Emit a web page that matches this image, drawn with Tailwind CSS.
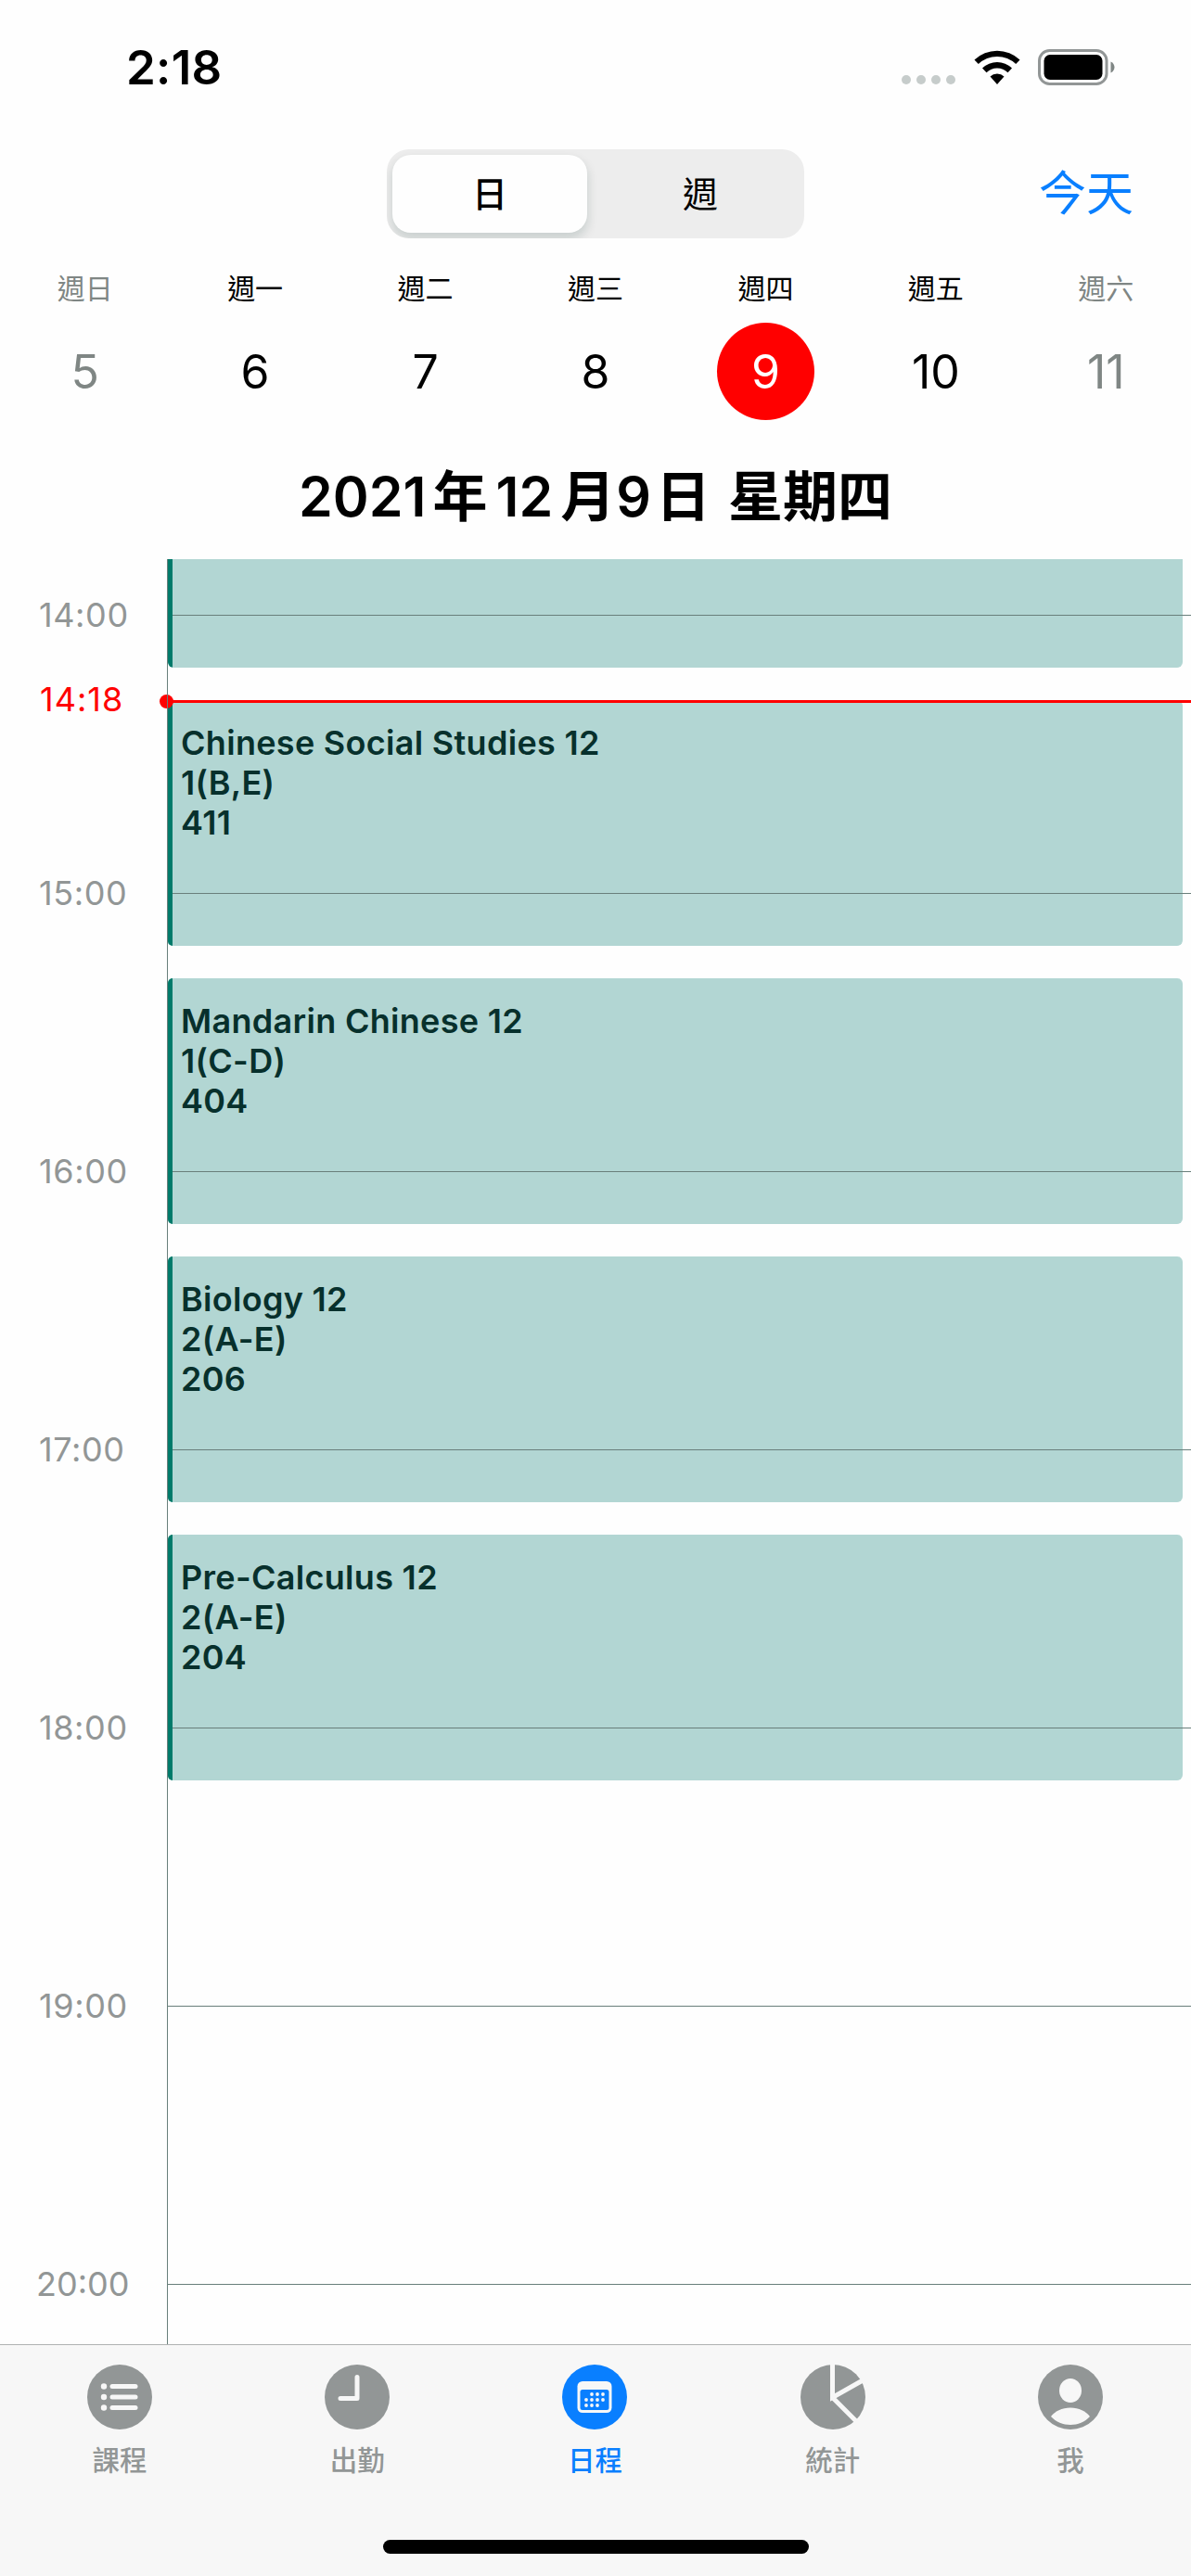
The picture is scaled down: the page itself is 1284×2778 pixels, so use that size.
<!DOCTYPE html>
<html lang="zh-Hant">
<head>
<meta charset="utf-8">
<title>日程</title>
<script src="https://cdn.jsdelivr.net/npm/@tailwindcss/browser@4"></script>
</head>
<body class="bg-white">
<div class="w-[1284px] h-[2778px] flex flex-col overflow-hidden bg-[#fefefe] text-black font-['Inter','Noto_Sans_CJK_TC',sans-serif]">

  <!-- Status bar -->
  <header class="h-[141px] shrink-0 flex items-start justify-between pl-[136px] pr-[82px]">
    <div class="mt-[43px] h-[60px] leading-[60px] text-[51px] font-semibold tracking-[0.3px]">2:18</div>
    <div class="mt-[53px] flex items-start">
      <div class="mt-[28px] mr-[20px] flex gap-[6px]">
        <span class="size-[10px] rounded-full bg-[#c6cccb]"></span>
        <span class="size-[10px] rounded-full bg-[#c6cccb]"></span>
        <span class="size-[10px] rounded-full bg-[#c6cccb]"></span>
        <span class="size-[10px] rounded-full bg-[#c6cccb]"></span>
      </div>
      <svg class="w-[50px] h-[38px]" viewBox="0 0 50 38" fill="#000">
        <path d="M0.5 11.5A35.5 35.5 0 0 1 49.500 11.500L45.200 16.100A29 29 0 0 0 4.800 16.100Z"/>
        <path d="M9 20.600A23 23 0 0 1 41 20.600L36.500 25.200A16.500 16.500 0 0 0 13.500 25.200Z"/>
        <path d="M17.500 29.500A11 11 0 0 1 32.500 29.500L25 38Z"/>
      </svg>
      <svg class="ml-[19px] w-[83px] h-[39px]" viewBox="0 0 83 39">
        <rect x="1.500" y="1.500" width="72.500" height="36" rx="11" fill="none" stroke="#929696" stroke-width="3"/>
        <rect x="6.500" y="6" width="63" height="27" rx="6.500" fill="#000"/>
        <path d="M78.500 13.500V25.500C81 24.500 82.500 22 82.500 19.500S81 14.500 78.500 13.500Z" fill="#7f8684"/>
      </svg>
    </div>
  </header>

  <!-- View switch -->
  <div class="h-[136px] shrink-0 grid grid-cols-[417px_450px_1fr]">
    <div class="col-start-2 mt-[20px] h-[96px] flex p-[6px] rounded-[24px] bg-[#ededed] overflow-hidden text-[38px]">
      <div class="w-[210px] h-[84px] rounded-[20px] bg-[#fefefe] shadow-[0_6px_11px_1px_rgba(0,50,42,0.15)] flex items-center justify-center font-medium">日</div>
      <div class="flex-1 h-[84px] flex items-center justify-center pl-[16px]">週</div>
    </div>
    <div class="mt-[30px] h-[76px] leading-[76px] pr-[62px] text-right text-[51px] text-[#097fff]">今天</div>
  </div>

  <!-- Week strip -->
  <div class="h-[193px] shrink-0 grid grid-cols-7 text-center">
    <div class="flex flex-col items-center text-[#7f8684]"><span class="mt-[12px] h-[44px] leading-[44px] text-[30px]">週日</span><span class="mt-[15px] size-[105px] leading-[107px] text-[50px]">5</span></div>
    <div class="flex flex-col items-center"><span class="mt-[12px] h-[44px] leading-[44px] text-[30px]">週一</span><span class="mt-[15px] size-[105px] leading-[107px] text-[50px]">6</span></div>
    <div class="flex flex-col items-center"><span class="mt-[12px] h-[44px] leading-[44px] text-[30px]">週二</span><span class="mt-[15px] size-[105px] leading-[107px] text-[50px]">7</span></div>
    <div class="flex flex-col items-center"><span class="mt-[12px] h-[44px] leading-[44px] text-[30px]">週三</span><span class="mt-[15px] size-[105px] leading-[107px] text-[50px]">8</span></div>
    <div class="flex flex-col items-center"><span class="mt-[12px] h-[44px] leading-[44px] text-[30px]">週四</span><span class="mt-[15px] size-[105px] leading-[107px] text-[50px] rounded-full bg-[#ff0000] text-white">9</span></div>
    <div class="flex flex-col items-center"><span class="mt-[12px] h-[44px] leading-[44px] text-[30px]">週五</span><span class="mt-[15px] size-[105px] leading-[107px] text-[50px]">10</span></div>
    <div class="flex flex-col items-center text-[#7f8684]"><span class="mt-[12px] h-[44px] leading-[44px] text-[30px]">週六</span><span class="mt-[15px] size-[105px] leading-[107px] text-[50px]">11</span></div>
  </div>

  <!-- Selected date -->
  <h1 class="h-[133px] shrink-0 flex justify-center pt-[26px] leading-[80px] text-[59px] font-semibold">2021<span class="ml-[7px]">年</span><span class="ml-[9px]">12</span><span class="ml-[8px]">月</span><span class="ml-px">9</span><span class="ml-[5px]">日</span><span class="ml-[19px]">星期四</span></h1>

  <!-- Timeline -->
  <main class="relative h-[1925px] shrink-0 overflow-hidden">
    <!-- Events -->
    <div class="absolute left-[181px] right-[9px] top-0 flex flex-col gap-[35px] text-[36px] leading-[43px] tracking-[0.3px] font-semibold text-[#07302c]">
      <div class="h-[117px] rounded-b-[6px] overflow-hidden bg-[#b2d6d3] flex"><div class="relative z-10 w-[5px] bg-[#007a6a] rounded-bl-[5px]"></div></div>
      <div class="h-[265px] rounded-[6px] bg-[#b2d6d3] flex"><div class="relative z-10 w-[5px] bg-[#007a6a] rounded-l-[5px]"></div><div class="pl-[9px] pt-[25px]"><p>Chinese Social Studies 12</p><p>1(B,E)</p><p>411</p></div></div>
      <div class="h-[265px] rounded-[6px] bg-[#b2d6d3] flex"><div class="relative z-10 w-[5px] bg-[#007a6a] rounded-l-[5px]"></div><div class="pl-[9px] pt-[25px]"><p>Mandarin Chinese 12</p><p>1(C-D)</p><p>404</p></div></div>
      <div class="h-[265px] rounded-[6px] bg-[#b2d6d3] flex"><div class="relative z-10 w-[5px] bg-[#007a6a] rounded-l-[5px]"></div><div class="pl-[9px] pt-[25px]"><p>Biology 12</p><p>2(A-E)</p><p>206</p></div></div>
      <div class="h-[265px] rounded-[6px] bg-[#b2d6d3] flex"><div class="relative z-10 w-[5px] bg-[#007a6a] rounded-l-[5px]"></div><div class="pl-[9px] pt-[25px]"><p>Pre-Calculus 12</p><p>2(A-E)</p><p>204</p></div></div>
    </div>

    <!-- Hours -->
    <div class="relative -mt-[90px] text-[36px] tracking-[0.6px] text-[#929696]">
      <div class="h-[300px] flex"><span class="w-[180px] pl-[42px] leading-[300px]">14:00</span><i class="flex-1 mt-[150px] h-px bg-[#697f7b]"></i></div>
      <div class="h-[300px] flex"><span class="w-[180px] pl-[42px] leading-[300px]">15:00</span><i class="flex-1 mt-[150px] h-px bg-[#697f7b]"></i></div>
      <div class="h-[300px] flex"><span class="w-[180px] pl-[42px] leading-[300px]">16:00</span><i class="flex-1 mt-[150px] h-px bg-[#697f7b]"></i></div>
      <div class="h-[300px] flex"><span class="w-[180px] pl-[42px] leading-[300px]">17:00</span><i class="flex-1 mt-[150px] h-px bg-[#697f7b]"></i></div>
      <div class="h-[300px] flex"><span class="w-[180px] pl-[42px] leading-[300px]">18:00</span><i class="flex-1 mt-[150px] h-px bg-[#697f7b]"></i></div>
      <div class="h-[300px] flex"><span class="w-[180px] pl-[42px] leading-[300px]">19:00</span><i class="flex-1 mt-[150px] h-px bg-[#697f7b]"></i></div>
      <div class="h-[300px] flex"><span class="w-[180px] pl-[39px] leading-[300px] tracking-normal">20:00</span><i class="flex-1 mt-[150px] h-px bg-[#697f7b]"></i></div>
    </div>

    <!-- Current time -->
    <div class="absolute inset-x-0 top-[132px] z-20 h-[40px] flex items-start text-[36px] tracking-[1px] text-[#ff0000]">
      <span class="w-[172px] pl-[43px] leading-[39px]">14:18</span>
      <i class="mt-[14px] size-[15px] rounded-full bg-[#ff0000]"></i>
      <i class="mt-[20px] -ml-px h-[3px] flex-1 bg-[#ff0000]"></i>
    </div>
    <i class="absolute z-30 left-[180px] top-0 bottom-0 w-px bg-[#697f7b]"></i>
  </main>

  <!-- Tab bar -->
  <nav class="relative h-[250px] shrink-0 border-t border-[#b0b2b2] bg-[#f7f7f7] grid grid-cols-5 pl-px pr-[2px] text-[29.500px] font-medium text-[#929696]">
    <div class="flex flex-col items-center pt-[21px]">
      <svg class="size-[70px]" viewBox="0 0 70 70"><circle cx="35" cy="35" r="35" fill="#929696"/><g fill="#f7f7f7"><circle cx="18" cy="23.500" r="3.200"/><circle cx="18" cy="35" r="3.200"/><circle cx="18" cy="46.500" r="3.200"/><rect x="24.500" y="21" width="30" height="5" rx="2.500"/><rect x="24.500" y="32.500" width="30" height="5" rx="2.500"/><rect x="24.500" y="44" width="30" height="5" rx="2.500"/></g></svg>
      <span class="mt-[11px] leading-[44px]">課程</span>
    </div>
    <div class="flex flex-col items-center pt-[21px]">
      <svg class="size-[70px]" viewBox="0 0 70 70"><circle cx="35" cy="35" r="35" fill="#929696"/><path d="M35 13.500V36.500H17" fill="none" stroke="#f7f7f7" stroke-width="5" stroke-linecap="round" stroke-linejoin="round"/></svg>
      <span class="mt-[11px] leading-[44px]">出勤</span>
    </div>
    <div class="flex flex-col items-center pt-[21px] text-[#097fff]">
      <svg class="size-[70px]" viewBox="0 0 70 70"><circle cx="35" cy="35" r="35" fill="#097fff"/><rect x="16.500" y="18" width="37" height="34" rx="5.500" fill="#f7f7f7"/><rect x="19.500" y="27" width="31" height="22" rx="2.500" fill="#097fff"/><g fill="#f7f7f7"><circle cx="32" cy="32" r="1.900"/><circle cx="38" cy="32" r="1.900"/><circle cx="44" cy="32" r="1.900"/><circle cx="26" cy="38" r="1.900"/><circle cx="32" cy="38" r="1.900"/><circle cx="38" cy="38" r="1.900"/><circle cx="44" cy="38" r="1.900"/><circle cx="26" cy="44" r="1.900"/><circle cx="32" cy="44" r="1.900"/><circle cx="38" cy="44" r="1.900"/></g></svg>
      <span class="mt-[11px] leading-[44px]">日程</span>
    </div>
    <div class="flex flex-col items-center pt-[21px]">
      <svg class="size-[70px]" viewBox="0 0 70 70"><circle cx="35" cy="35" r="35" fill="#929696"/><path d="M34.500 -1V35.500L68 16.500M34.500 35.500L60.500 61.500" fill="none" stroke="#f7f7f7" stroke-width="5"/></svg>
      <span class="mt-[11px] leading-[44px]">統計</span>
    </div>
    <div class="flex flex-col items-center pt-[21px]">
      <svg class="size-[70px]" viewBox="0 0 70 70"><circle cx="35" cy="35" r="35" fill="#929696"/><ellipse cx="35" cy="28" rx="12" ry="13" fill="#f7f7f7"/><path d="M14 56C18 50.500 26 46.500 35 46.500S52 50.500 56 56C50.500 62 43 65 35 65S19.500 62 14 56Z" fill="#f7f7f7"/></svg>
      <span class="mt-[11px] leading-[44px]">我</span>
    </div>
    <div class="absolute left-[413px] top-[210px] w-[459px] h-[15px] rounded-full bg-black"></div>
  </nav>
</div>
</body>
</html>
